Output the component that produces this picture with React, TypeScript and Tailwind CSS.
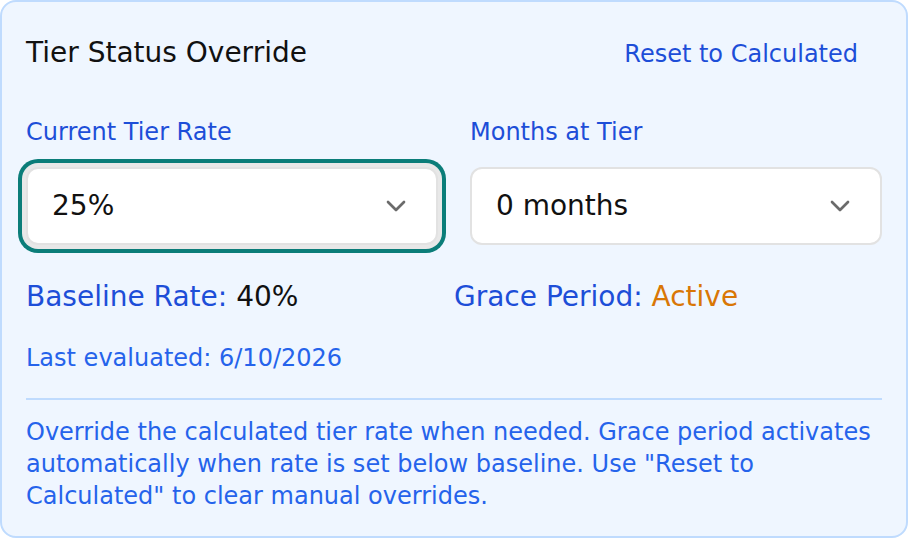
import React from "react";
import { ChevronDown } from "lucide-react";

function SelectBox({ value, focused }: { value: string; focused?: boolean }) {
  return (
    <div
      className={
        "flex h-[78px] items-center justify-between rounded-[12px] border-2 border-[#e2e2e2] bg-white pl-[24px] pr-[24px] " +
        (focused ? "shadow-[0_0_0_4px_#e8e8e8,0_0_0_8px_#0b7d79]" : "")
      }
    >
      <span className="pb-[1px] text-[28px] leading-[40px] text-[#111111]">{value}</span>
      <ChevronDown size={32} strokeWidth={2} className="text-[#6b6b6b]" />
    </div>
  );
}

export default function App() {
  return (
    <div
      className="w-[908px] bg-white"
      style={{ fontFamily: '"DejaVu Sans", Verdana, sans-serif' }}
    >
      <div className="h-[538px] rounded-[16px] border-2 border-[#bfdbfe] bg-[#eff6ff] px-[24px] pt-[31px] pb-[24px]">
        <div className="flex items-baseline justify-between">
          <h2 className="text-[28px] leading-[40px] text-[#111111]">Tier Status Override</h2>
          <button className="px-[24px] text-[24px] leading-[32px] text-[#1d4ed8]">
            Reset to Calculated
          </button>
        </div>

        <div className="mt-[43px] grid grid-cols-2 gap-x-[32px]">
          <div>
            <div className="mb-[19px] text-[24px] leading-[32px] text-[#1d4ed8]">Current Tier Rate</div>
            <SelectBox value="25%" focused />
          </div>
          <div>
            <div className="mb-[19px] text-[24px] leading-[32px] text-[#1d4ed8]">Months at Tier</div>
            <SelectBox value="0 months" />
          </div>
        </div>

        <div className="mt-[32px] grid grid-cols-2 text-[28px] leading-[40px]">
          <div>
            <span className="text-[#1d4ed8]">Baseline Rate: </span>
            <span className="text-[#111111]">40%</span>
          </div>
          <div>
            <span className="text-[#1d4ed8]">Grace Period: </span>
            <span className="text-[#d97706]">Active</span>
          </div>
        </div>

        <div className="mt-[25px] text-[24px] leading-[32px] text-[#2563eb]">
          Last evaluated: 6/10/2026
        </div>

        <div className="mt-[24px] border-t-2 border-[#bfdbfe] pt-[16px]">
          <p className="text-[24px] leading-[32px] text-[#2563eb]">
            Override the calculated tier rate when needed. Grace period activates automatically when rate is set below baseline. Use "Reset to Calculated" to clear manual overrides.
          </p>
        </div>
      </div>
    </div>
  );
}
